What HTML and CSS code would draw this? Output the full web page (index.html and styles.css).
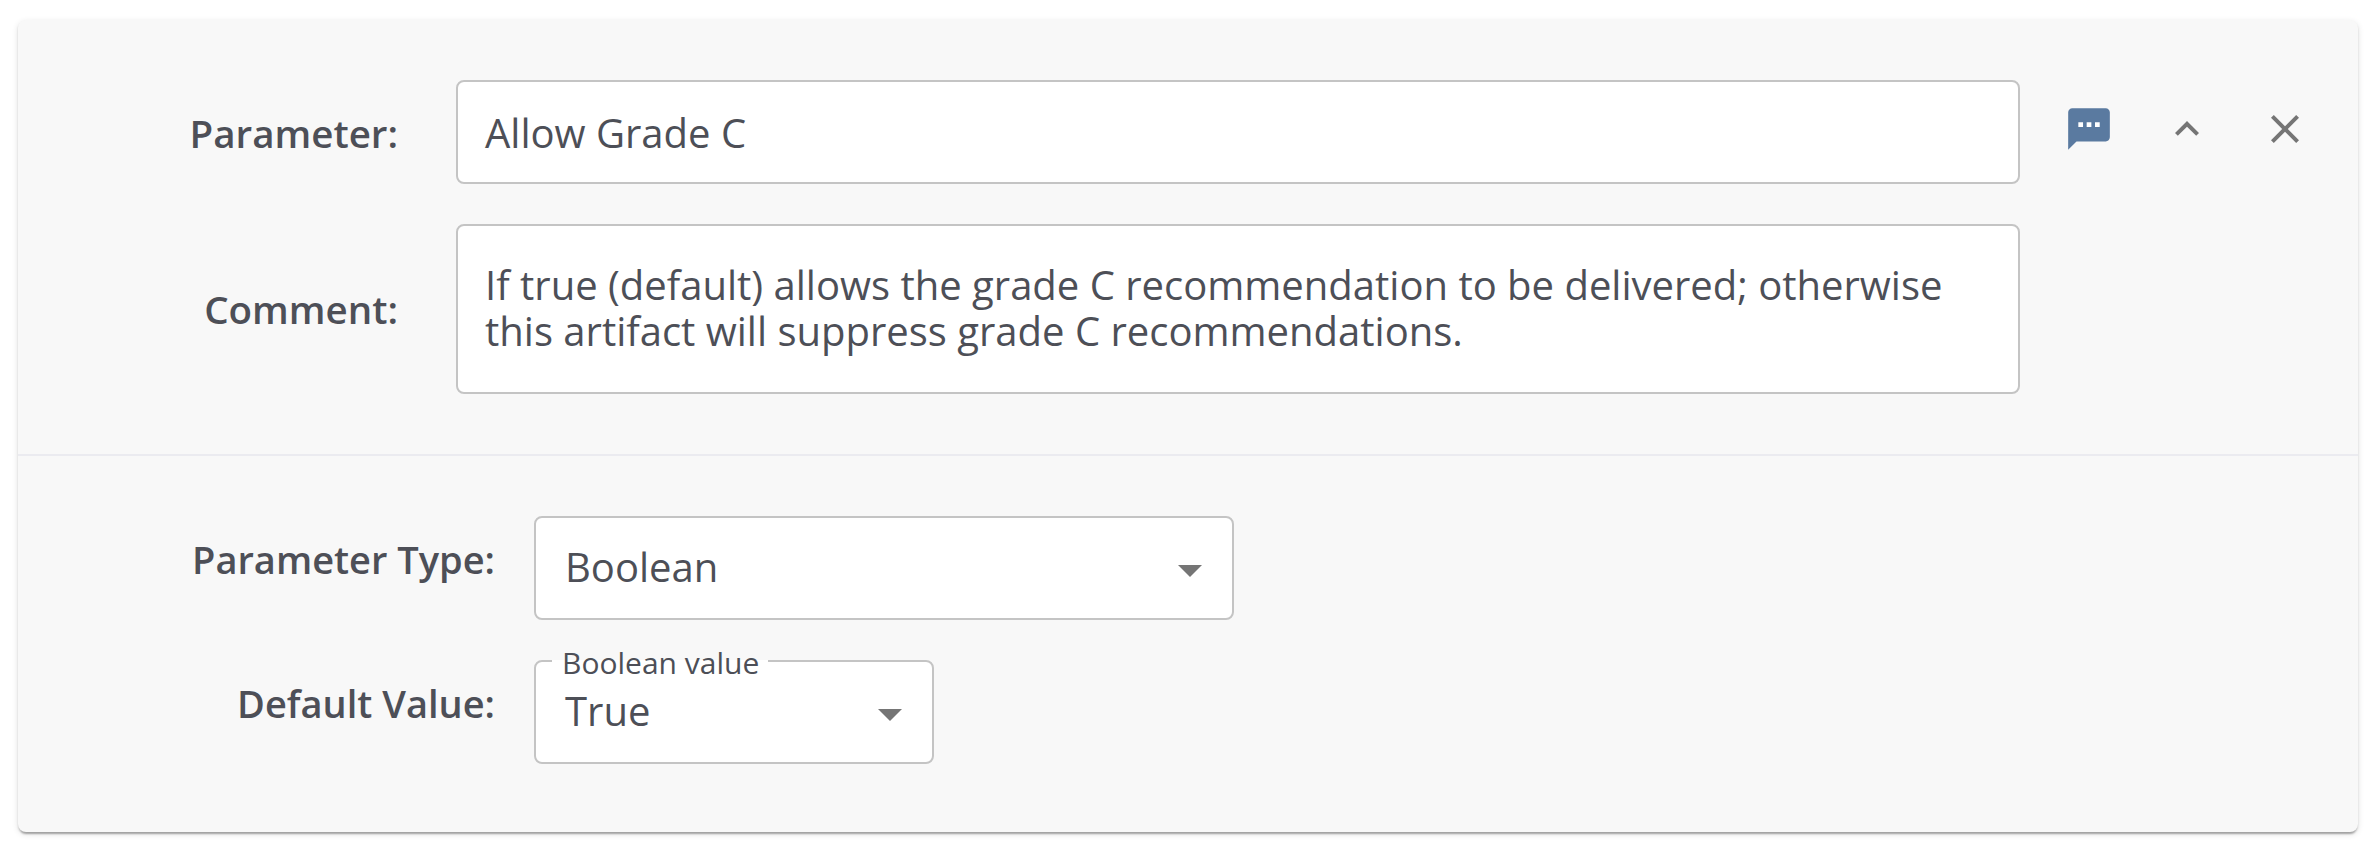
FILE: index.html
```html
<!DOCTYPE html>
<html lang="en">
<head>
<meta charset="utf-8">
<title>Parameter</title>
<link rel="stylesheet" href="styles.css">
</head>
<body>
<main class="card">
  <section class="card-header">
    <div class="row">
      <label class="label label-name">Parameter:</label>
      <div class="field field-wide">Allow Grade C</div>
      <div class="actions">
        <svg class="icon icon-comment" viewBox="0 0 24 24"><path d="M20 2H4c-1.1 0-1.99.9-1.99 2L2 22l4-4h14c1.1 0 2-.9 2-2V4c0-1.1-.9-2-2-2z"/><path fill="#fff" d="M6.88 8.8h2.26v2.26H6.88zm4 0h2.26v2.26h-2.26zm4 0h2.26v2.26h-2.26z"/></svg>
        <svg class="icon" viewBox="0 0 24 24"><path d="M12 8l-6 6 1.41 1.41L12 10.83l4.59 4.58L18 14z"/></svg>
        <svg class="icon" viewBox="0 0 24 24"><path d="M19 6.41L17.59 5 12 10.59 6.41 5 5 6.41 10.59 12 5 17.59 6.41 19 12 13.41 17.59 19 19 17.59 13.41 12z"/></svg>
      </div>
    </div>
    <div class="row">
      <label class="label label-name label-comment">Comment:</label>
      <div class="field field-wide field-multiline">If true (default) allows the grade C recommendation to be delivered; otherwise this artifact will suppress grade C recommendations.</div>
    </div>
  </section>
  <section class="card-body">
    <div class="row">
      <label class="label label-type">Parameter Type:</label>
      <div class="field select select-type">
        <span>Boolean</span>
        <svg class="arrow" viewBox="0 0 24 12"><path d="M0 0h24L12 12z"/></svg>
      </div>
    </div>
    <div class="row">
      <label class="label label-type">Default Value:</label>
      <div class="field select select-value">
        <span class="notch">Boolean value</span>
        <span>True</span>
        <svg class="arrow" viewBox="0 0 24 12"><path d="M0 0h24L12 12z"/></svg>
      </div>
    </div>
  </section>
</main>
</body>
</html>
```
FILE: styles.css
```css
* {
  box-sizing: border-box;
}

body {
  margin: 0;
  padding: 20px 16px 18px 18px;
  background: #fff;
  color: #4d4f57;
  font-family: "Open Sans", sans-serif;
}

.card {
  height: 812px;
  border-radius: 8px;
  background: #f8f8f8;
  box-shadow: 0 4px 2px -2px rgba(0, 0, 0, .2), 0 2px 2px rgba(0, 0, 0, .14), 0 2px 6px rgba(0, 0, 0, .12);
}

.card-header,
.card-body {
  display: flex;
  flex-direction: column;
  gap: 40px;
  padding-top: 60px;
}

.card-header {
  height: 436px;
  border-bottom: 2px solid #ebebf0;
}

.row {
  display: flex;
  align-items: center;
}

.label {
  font-size: 38px;
  font-weight: 600;
  line-height: 52px;
  text-align: right;
  white-space: nowrap;
}

.label-name {
  width: 380px;
  margin-right: 58px;
  padding-top: 2px;
  font-size: 38.5px;
}

.label-comment {
  padding-top: 0;
}

.label-type {
  width: 477px;
  margin-right: 39px;
  padding-bottom: 18px;
}

.field {
  display: flex;
  align-items: center;
  height: 104px;
  padding: 2px 26px 0 27px;
  border: 2px solid #c4c4c4;
  border-radius: 8px;
  background: #fff;
  font-size: 40px;
  line-height: 46px;
}

.field-wide {
  width: 1564px;
}

.field-multiline {
  height: 170px;
  padding: 0 26px 2px 27px;
}

.select {
  position: relative;
  justify-content: space-between;
  padding: 0 30px 2px 29px;
}

.select-type {
  width: 700px;
}

.select-value {
  width: 400px;
}

.notch {
  position: absolute;
  top: -2px;
  left: 16px;
  height: 2px;
  width: 216px;
  padding-left: 10px;
  background: #fff;
  font-size: 30px;
  line-height: 6px;
  white-space: nowrap;
}

.arrow {
  width: 24px;
  height: 12px;
  margin-top: 8px;
  fill: #757575;
}

.actions {
  display: flex;
  align-items: center;
  gap: 50px;
  height: 50px;
  margin: -6px 0 0 44px;
}

.icon {
  width: 48px;
  height: 48px;
  fill: #757575;
}

.icon-comment {
  width: 50px;
  height: 50px;
  margin-right: -1px;
  fill: #5a7aa0;
}
```
